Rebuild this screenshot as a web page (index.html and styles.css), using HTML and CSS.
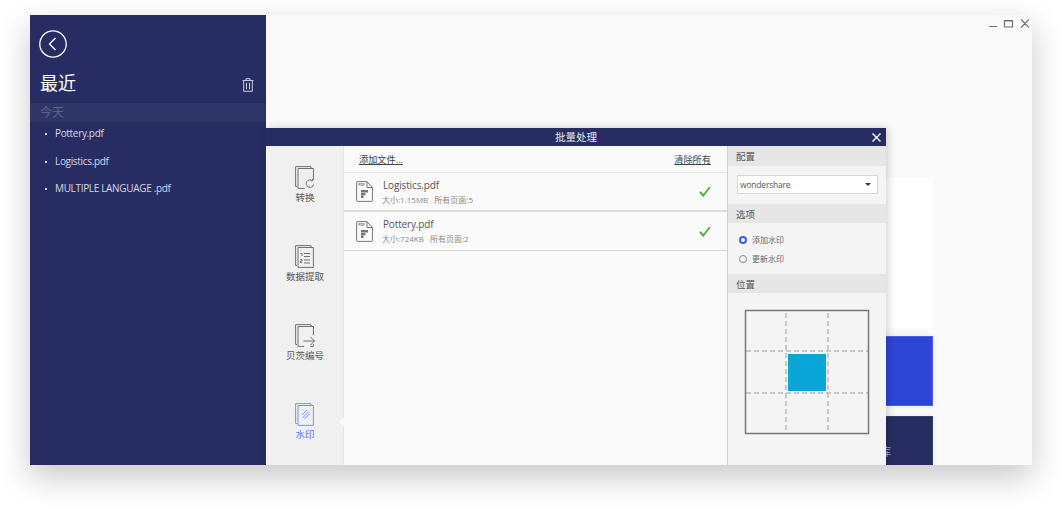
FILE: index.html
```html
<!DOCTYPE html>
<html lang="zh">
<head>
  <meta charset="UTF-8">
  <title>批量处理</title>
  <link rel="stylesheet" href="styles.css">
</head>
<body>
  <div class="window">
    <aside class="sidebar">
      <svg class="back" width="28" height="28" viewBox="0 0 28 28"><circle cx="14" cy="14" r="13.2"/><path d="M16.5 8 L10.5 14 L16.5 20"/></svg>
      <div class="recent-head">
        <span class="recent-title">最近</span>
        <svg class="trash" width="12" height="14" viewBox="0 0 12 14"><path d="M.5 2.5h11M4 2.5V.7h4v1.8M1.7 2.5v10.8h8.6V2.5M4.5 4.8v6.500M7.5 4.8v6.500"/></svg>
      </div>
      <div class="today">今天</div>
      <ul class="recent-list">
        <li>Pottery.pdf</li>
        <li>Logistics.pdf</li>
        <li>MULTIPLE LANGUAGE .pdf</li>
      </ul>
    </aside>

    <main class="home">
      <div class="win-controls">
        <svg width="40" height="10" viewBox="0 0 40 10"><path d="M0 7.500h8M15.500 1.500h8v6.500h-8zM15.500 2h8M32 .5l8 8M40 .5l-8 8"/></svg>
      </div>
      <div class="cards">
        <div class="card card-white"></div>
        <div class="card card-blue"></div>
        <div class="card card-navy"><span>库</span></div>
      </div>
    </main>

    <section class="dialog">
      <header class="dialog-head">
        <span>批量处理</span>
        <svg class="dialog-close" width="9" height="9" viewBox="0 0 9 9"><path d="M.5 .5l8 8M8.500 .5l-8 8"/></svg>
      </header>
      <div class="dialog-body">
        <nav class="tabs">
          <div class="tab">
            <svg width="20" height="23" viewBox="0 0 20 23"><path d="M2 20.500H.6V.6h15.400V2"/><path d="M10 22.400H3V2.500h15.400V14"/><path d="M18.700 18.500a3.800 3.800 0 1 1-1.300-3.800M17.600 13v1.900h-1.900"/></svg>
            <span>转换</span>
          </div>
          <div class="tab">
            <svg width="20" height="23" viewBox="0 0 20 23"><path d="M2 20.500H.6V.6h15.400V2"/><path d="M3 2.500h15.400v19.900H3zM9 8.500h6M9 11.500h6M9 15h6M9 18h6M5.500 8.500h1.500v2.500M5.500 14.500h1.500v1.500h-1.500v1.700h1.500"/></svg>
            <span>数据提取</span>
          </div>
          <div class="tab">
            <svg width="20" height="23" viewBox="0 0 20 23"><path d="M2 20.500H.6V.6h15.400V2"/><path d="M9 22.400H3V2.500h15.400V11M18.400 20v2.400h-3"/><path d="M8.500 17h11M15.500 13l4 4-4 4"/></svg>
            <span>贝茨编号</span>
          </div>
          <div class="tab tab-active">
            <svg width="20" height="23" viewBox="0 0 20 23"><path d="M2 20.500H.6V.6h15.400V2"/><path d="M3 2.500h15.400v19.900H3zM7 12l5-5M7.500 15l6.500-6.500M9.500 16l5-5"/></svg>
            <span>水印</span>
          </div>
        </nav>

        <div class="files">
          <div class="files-bar">
            <a>添加文件...</a>
            <a>清除所有</a>
          </div>
          <div class="file-row file-row-first">
            <svg class="pdf" width="17" height="21" viewBox="0 0 17 21"><path class="pdf-line" d="M11 .6H1.800Q.6 .6 .6 1.800v17.400q0 1.200 1.200 1.200h13.400q1.200 0 1.200-1.200V6.500L11 .6v5.900h5.600"/><text class="pdf-tag" x="2.200" y="5">PDF</text><path class="pdf-fill" d="M5 9h7v2.500H5zM5 12h4.500v2.300H5zM5 14.500h2.500v2.500H5z"/></svg>
            <div class="file-info">
              <div class="file-name">Logistics.pdf</div>
              <div class="file-meta"><span>大小:1.15MB</span><span>所有页面:5</span></div>
            </div>
            <svg class="check" width="12" height="11" viewBox="0 0 12 11"><path d="M1 6l3.200 3.500L11 1"/></svg>
          </div>
          <div class="file-row">
            <svg class="pdf" width="17" height="21" viewBox="0 0 17 21"><path class="pdf-line" d="M11 .6H1.800Q.6 .6 .6 1.800v17.400q0 1.200 1.200 1.200h13.400q1.200 0 1.200-1.200V6.500L11 .6v5.900h5.600"/><text class="pdf-tag" x="2.200" y="5">PDF</text><path class="pdf-fill" d="M5 9h7v2.500H5zM5 12h4.500v2.300H5zM5 14.500h2.500v2.500H5z"/></svg>
            <div class="file-info">
              <div class="file-name">Pottery.pdf</div>
              <div class="file-meta"><span>大小:724KB</span><span>所有页面:2</span></div>
            </div>
            <svg class="check" width="12" height="11" viewBox="0 0 12 11"><path d="M1 6l3.200 3.500L11 1"/></svg>
          </div>
        </div>

        <div class="options">
          <h4>配置</h4>
          <div class="opt-select">
            <div class="select"><span>wondershare</span><i class="caret"></i></div>
          </div>
          <h4 class="h-short">选项</h4>
          <div class="opt-radios">
            <label class="radio radio-on"><i></i>添加水印</label>
            <label class="radio"><i></i>更新水印</label>
          </div>
          <h4 class="h-short">位置</h4>
          <div class="opt-grid">
            <svg width="126" height="126" viewBox="0 0 126 126">
              <path class="grid-dash" d="M42 4V124M84 4V124M2 42H124M2 84H124"/>
              <rect class="grid-frame" x="1.500" y="1.500" width="123" height="123"/>
              <rect class="grid-pick" x="44" y="45" width="38" height="37"/>
            </svg>
          </div>
        </div>
      </div>
    </section>
  </div>
</body>
</html>
```

FILE: styles.css
```css
* { box-sizing: border-box; }
html, body { margin: 0; height: 100%; background: #fff; overflow: hidden; }
body { padding: 15px 30px 45px; font-family: "Open Sans", "Noto Sans CJK SC", sans-serif; color: #555; }
svg { display: block; fill: none; }

.window { position: relative; display: flex; width: 1002px; height: 450px; background: #fafafa; box-shadow: 0 12px 30px rgba(0,0,0,.22); overflow: hidden; }

/* left list */
.sidebar { width: 236px; flex: none; background: #272d62; color: #fff; }
.back { margin: 15px 0 0 9px; stroke: #fff; stroke-width: 1.3; }
.recent-head { display: flex; justify-content: space-between; align-items: center; height: 30px; margin-top: 10px; padding: 0 12px 0 10px; }
.recent-title { font-size: 18px; line-height: 30px; }
.trash { stroke: #c9cbdb; stroke-width: 1; margin-top: 4px; }
.today { height: 19px; margin-top: 5px; padding-left: 10px; background: #2f3566; color: #5c6291; font-size: 12px; line-height: 20px; }
.recent-list { margin: -1px 0 0; padding: 0 0 0 25px; list-style: none; }
.recent-list li { position: relative; height: 27.500px; font-size: 10px; letter-spacing: -.33px; line-height: 25px; color: #d6d8e6; }
.recent-list li::before { content: ""; position: absolute; left: -10px; top: 12px; width: 2px; height: 2px; background: #d6d8e6; }

/* home behind the dialog */
.home { flex: 1; padding: 4px 3px 0 0; }
.win-controls { display: flex; justify-content: flex-end; }
.win-controls svg { stroke: #707070; stroke-width: 1.2; }
.cards { width: 100px; margin: 149px 0 0 567px; }
.card { width: 100px; border: 1px solid transparent; }
.card-white { height: 150px; background: #fff; }
.card-blue { height: 70px; margin-top: 8px; background: #2f45d6; border-color: #4a5fe6; box-shadow: 0 0 6px rgba(0,0,0,.08); }
.card-navy { height: 60px; margin-top: 10px; padding-top: 26px; background: #272d62; border-color: #363c70; color: #a9acc3; font-size: 11px; box-shadow: 0 0 6px rgba(0,0,0,.08); }
.card-navy span { margin-left: 46px; }

/* dialog */
.dialog { position: absolute; left: 236px; top: 113px; width: 620px; height: 337px; display: flex; flex-direction: column; box-shadow: 2px 0 8px rgba(0,0,0,.18); }
.dialog-head { position: relative; flex: none; height: 18px; background: #272d62; color: #e8e9f0; font-size: 10.500px; line-height: 18px; text-align: center; }
.dialog-close { position: absolute; right: 5px; top: 5px; stroke: #fff; stroke-width: 1.4; }
.dialog-body { flex: 1; display: flex; min-height: 0; }

.tabs { position: relative; flex: none; width: 78px; padding-top: 20px; background: #f0f0f0; border-left: 1px solid #fafafa; border-right: 1px solid #e6e6e6; }
.tab { display: flex; flex-direction: column; align-items: center; height: 79px; font-size: 9.500px; color: #555; }
.tab svg { stroke: #707070; stroke-width: 1; margin-bottom: 2px; }
.tab span { line-height: 14px; }
.tab-active { position: relative; color: #5f74f0; }
.tab-active svg { stroke: #7c8ff5; }
.tab-active::after { content: ""; position: absolute; right: -1px; top: 14px; border: 5px solid transparent; border-left: 0; border-right-color: #fafafa; }

.files { flex: none; width: 383px; background: #fafafa; }
.files-bar { display: flex; justify-content: space-between; height: 26px; padding: 7px 16px 0 15px; font-size: 9.200px; line-height: 14px; color: #444; }
.files-bar a { text-decoration: underline; }
.file-row { display: flex; align-items: center; height: 39px; padding: 0 16px 0 12px; border-bottom: 1px solid #d9d9d9; }
.file-row-first { height: 40px; border-top: 1px solid #e8e8e8; border-bottom: 2px solid #dcdcdc; }
.pdf { flex: none; margin-right: 10px; }
.pdf-line { stroke: #777; stroke-width: 1; }
.pdf-fill { fill: #777; }
.pdf-tag { fill: #777; font-size: 3.500px; font-weight: 700; }
.file-info { flex: 1; }
.file-name { font-size: 10px; letter-spacing: -.15px; line-height: 15px; color: #555; }
.file-meta { display: flex; gap: 6px; margin-left: -1px; font-size: 8px; line-height: 13px; color: #8a8a8a; }
.check { stroke: #5aad45; stroke-width: 2; }

.options { flex: 1; background: #f4f4f4; border-left: 1px solid #d2d2d2; }
.options h4 { margin: 0; height: 20px; padding-left: 8px; background: #e6e6e6; font-size: 9.500px; font-weight: 400; line-height: 22px; color: #555; }
.options .h-short { height: 19px; line-height: 21px; }
.opt-select { height: 38px; padding: 9px 8px 0 9px; }
.select { display: flex; align-items: center; justify-content: space-between; height: 19px; padding: 0 6px 0 2px; background: #fff; border: 1px solid #d8d8d8; font-size: 8.500px; letter-spacing: -.2px; color: #555; }
.caret { border: 3px solid transparent; border-bottom: 0; border-top: 3px solid #333; }
.opt-radios { height: 51px; padding-top: 7px; }
.radio { display: flex; align-items: center; gap: 5px; height: 19px; padding-left: 11px; font-size: 8px; color: #666; }
.radio i { width: 8px; height: 8px; border: 1px solid #888; border-radius: 50%; background: #f8f8f8; }
.radio-on i { border: 2.500px solid #4057e8; background: #fff; }
.opt-grid { padding: 16px 0 0 16px; }
.grid-dash { stroke: #bcbcbc; stroke-width: 1.500; stroke-dasharray: 5 3; }
.grid-frame { stroke: #777; stroke-width: 1.500; }
.grid-pick { fill: #0ba6d8; }
```
